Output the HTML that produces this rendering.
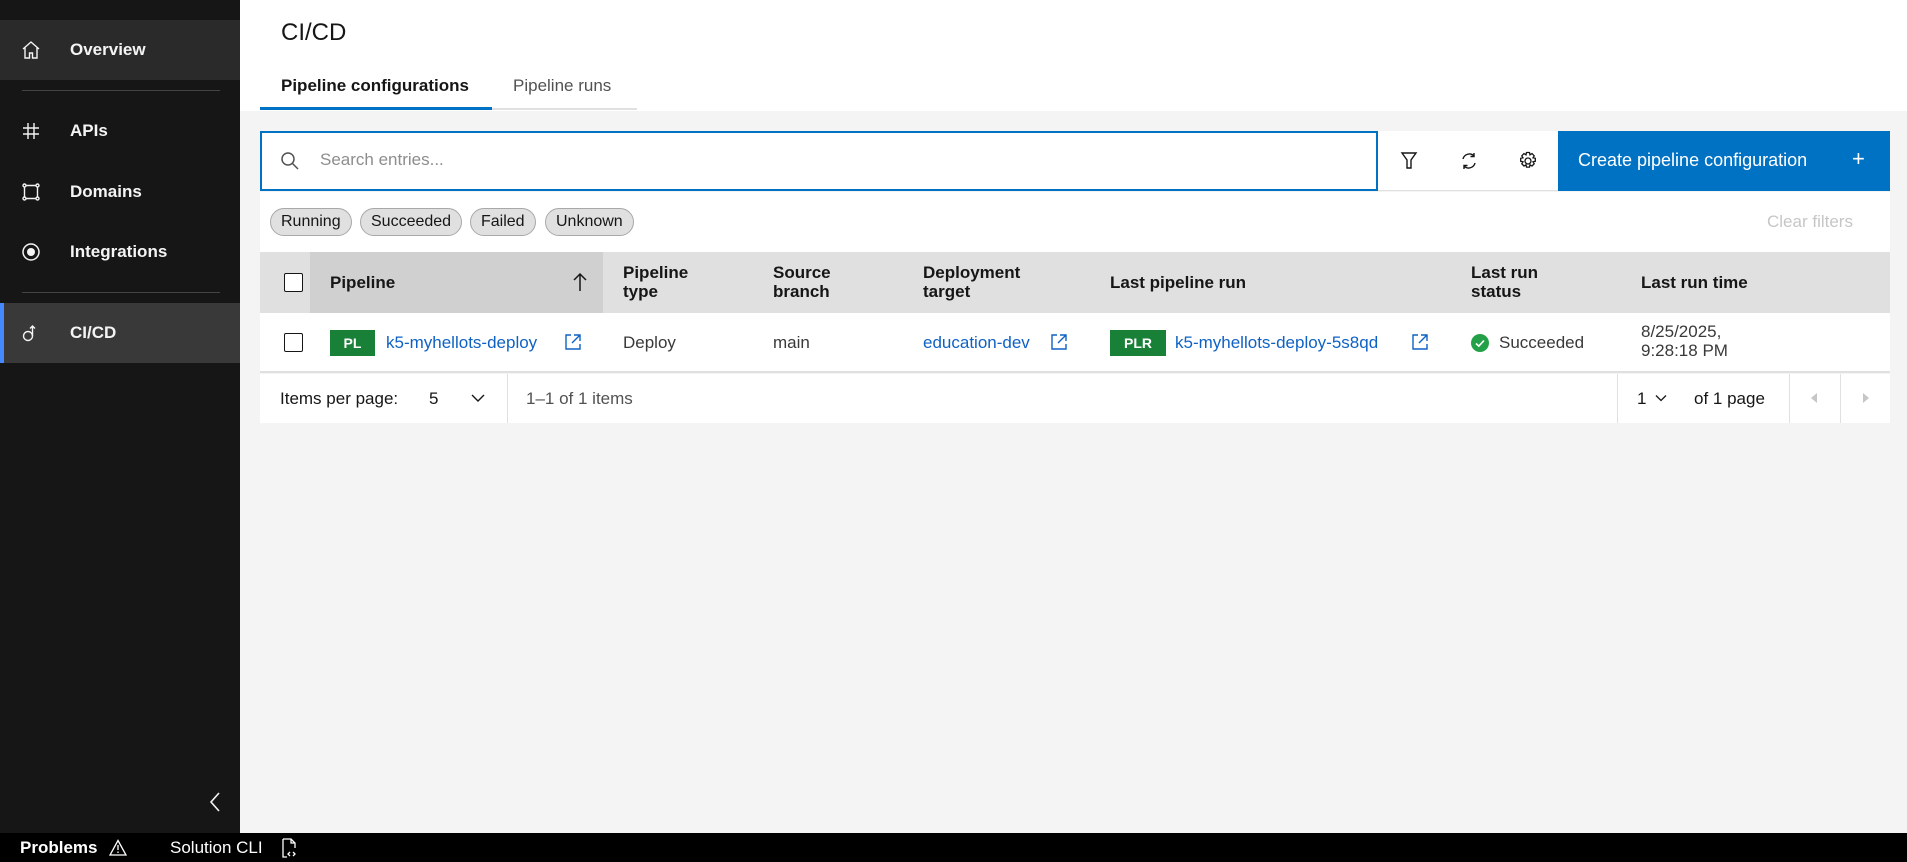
<!DOCTYPE html>
<html><head><meta charset="utf-8"><style>
*{box-sizing:border-box;margin:0;padding:0}
body{width:1907px;height:862px;overflow:hidden;background:#f4f4f4;font-family:"Liberation Sans",sans-serif;font-size:16px;color:#161616;position:relative}
.a{position:absolute}
.side{left:0;top:0;width:240px;height:833px;background:#161616}
.nav{position:absolute;left:0;width:240px;height:60px;color:#f4f4f4;font-weight:bold;font-size:17px}
.nav span{position:absolute;left:70px;top:50%;transform:translateY(-50%)}
.nav svg{position:absolute;left:21px;top:50%;transform:translateY(-50%)}
.div{position:absolute;left:22px;width:198px;height:1px;background:#444}
.bar{left:0;top:833px;width:1907px;height:29px;background:#000;color:#fff;font-size:17px}
.hdr{left:240px;top:0;width:1667px;height:111px;background:#fff}
.tag{position:absolute;top:208px;height:28px;border:1px solid #a8a8a8;background:#e0e0e0;border-radius:14px;font-size:16px;line-height:26px;padding:0 10px;color:#161616}
.th{position:absolute;font-weight:bold;font-size:17px;line-height:19px}
.td{position:absolute;font-size:17px;line-height:19px;color:#393939}
.lnk{color:#0f62c4}
.badge{position:absolute;background:#198038;color:#fff;font-weight:bold;font-size:14px;text-align:center;line-height:26px;height:26px}
.cb{position:absolute;width:19px;height:19px;border:1.5px solid #161616;border-radius:2px;background:#fff}
</style></head><body>
<div class="a side">
 <div class="nav" style="top:20px;background:#2a2a2a"><svg width="20" height="20" viewBox="0 0 20 20" fill="none" stroke="#f4f4f4" stroke-width="1.4"><path d="M2 9L10 2l8 7M4 7.5V18h4.5v-5h3v5H16V7.5"/></svg><span>Overview</span></div>
 <div class="div" style="top:90px"></div>
 <div class="nav" style="top:101px"><svg width="20" height="20" viewBox="0 0 20 20" fill="none" stroke="#f4f4f4" stroke-width="1.4"><path d="M7 2v16M13 2v16M2 7h16M2 13h16"/></svg><span>APIs</span></div>
 <div class="nav" style="top:162px"><svg width="20" height="20" viewBox="0 0 20 20" fill="none" stroke="#f4f4f4" stroke-width="1.4"><path d="M3.5 5v10M16.5 5v10M5 3.5h10M5 16.5h10"/><circle cx="3.5" cy="3.5" r="1.5"/><circle cx="16.5" cy="3.5" r="1.5"/><circle cx="3.5" cy="16.5" r="1.5"/><circle cx="16.5" cy="16.5" r="1.5"/></svg><span>Domains</span></div>
 <div class="nav" style="top:222px"><svg width="20" height="20" viewBox="0 0 20 20"><circle cx="10" cy="10" r="8" fill="none" stroke="#f4f4f4" stroke-width="1.5"/><circle cx="10" cy="10" r="4" fill="#f4f4f4"/></svg><span>Integrations</span></div>
 <div class="div" style="top:292px"></div>
 <div class="nav" style="top:303px;background:#393939;border-left:4px solid #4589ff"><svg width="20" height="20" viewBox="0 0 20 20" fill="none" stroke="#f4f4f4" stroke-width="1.4" style="left:17px"><circle cx="7" cy="13" r="4.5"/><path d="M11.5 13V3M9 5.5l2.5-2.5 2.5 2.5"/></svg><span style="left:66px">CI/CD</span></div>
 <svg class="a" style="left:207px;top:790px" width="16" height="24" viewBox="0 0 16 24" fill="none" stroke="#f4f4f4" stroke-width="1.6"><path d="M12 3L4 12l8 9"/></svg>
</div>
<div class="a bar">
 <span class="a" style="left:20px;top:5px;font-weight:bold">Problems</span>
 <svg class="a" style="left:109px;top:6px" width="18" height="17" viewBox="0 0 18 17" fill="none" stroke="#fff" stroke-width="1.3"><path d="M9 1.5L17 16H1z M9 6v5M9 12.5v1.5"/></svg>
 <span class="a" style="left:170px;top:5px">Solution CLI</span>
 <svg class="a" style="left:281px;top:5px" width="16" height="20" viewBox="0 0 16 20" fill="none" stroke="#fff" stroke-width="1.3"><path d="M2 1h8l4 4v5M10 1v4h4M2 1v18h4M9 14l-2 2 2 2M12 14l2 2-2 2"/></svg>
</div>
<div class="a hdr">
 <div class="a" style="left:41px;top:19px;font-size:24px">CI/CD</div>
 <div class="a" style="left:41px;top:76px;font-size:17px;font-weight:bold">Pipeline configurations</div>
 <div class="a" style="left:273px;top:76px;font-size:17px;color:#525252">Pipeline runs</div>
 <div class="a" style="left:20px;top:107px;width:232px;height:3px;background:#0072c3"></div>
 <div class="a" style="left:252px;top:108px;width:145px;height:2px;background:#e0e0e0"></div>
</div>
<div class="a" style="left:260px;top:131px;width:1630px;height:60px;background:#fff;border-bottom:1px solid #e0e0e0"></div>
<div class="a" style="left:260px;top:131px;width:1118px;height:60px;border:2px solid #0072c3;background:#fff"></div>
<svg class="a" style="left:280px;top:151px" width="20" height="20" viewBox="0 0 20 20" fill="none" stroke="#525252" stroke-width="1.5"><circle cx="8" cy="8" r="6"/><path d="M12.5 12.5L18 18"/></svg>
<div class="a" style="left:320px;top:150px;font-size:17px;color:#8d8d8d">Search entries...</div>
<svg class="a" style="left:1400px;top:151px" width="18" height="20" viewBox="0 0 18 20" fill="none" stroke="#161616" stroke-width="1.4"><path d="M2 2h14l-5 7v8h-4v-8z"/></svg>
<svg class="a" style="left:1459px;top:151px" width="20" height="20" viewBox="0 0 20 20" fill="none" stroke="#161616" stroke-width="1.4"><path d="M4 8a6.5 6.5 0 0 1 11-3M16 12a6.5 6.5 0 0 1-11 3M15 2v3.5h-3.5M5 18v-3.5h3.5"/></svg>
<svg class="a" style="left:1518px;top:151px" width="20" height="20" viewBox="0 0 20 20" fill="none" stroke="#161616" stroke-width="1.3"><circle cx="10" cy="10" r="3"/><path d="M8.5 1.5h3l.5 2.3 2-1.2 2.2 2.2-1.2 2 2.3.5v3l-2.3.5 1.2 2-2.2 2.2-2-1.2-.5 2.3h-3l-.5-2.3-2 1.2-2.2-2.2 1.2-2-2.3-.5v-3l2.3-.5-1.2-2 2.2-2.2 2 1.2z"/></svg>
<div class="a" style="left:1558px;top:131px;width:332px;height:60px;background:#0072c3;color:#fff;font-size:18px">
 <span class="a" style="left:20px;top:19px">Create pipeline configuration</span>
 <span class="a" style="left:294px;top:15px;font-size:22px">+</span>
</div>
<div class="a" style="left:260px;top:192px;width:1630px;height:60px;background:#fff"></div>
<div class="tag" style="left:270px">Running</div>
<div class="tag" style="left:360px">Succeeded</div>
<div class="tag" style="left:470px">Failed</div>
<div class="tag" style="left:545px">Unknown</div>
<div class="a" style="left:1767px;top:212px;font-size:17px;color:#c6c6c6">Clear filters</div>
<div class="a" style="left:260px;top:252px;width:1630px;height:61px;background:#e0e0e0"></div>
<div class="a" style="left:310px;top:252px;width:293px;height:61px;background:#d0d0d0"></div>
<div class="cb" style="left:284px;top:273px"></div>
<div class="th" style="left:330px;top:273px">Pipeline</div>
<svg class="a" style="left:572px;top:272px" width="16" height="20" viewBox="0 0 16 20" fill="none" stroke="#161616" stroke-width="1.5"><path d="M8 19V2M2 8l6-6 6 6"/></svg>
<div class="th" style="left:623px;top:263px">Pipeline<br>type</div>
<div class="th" style="left:773px;top:263px">Source<br>branch</div>
<div class="th" style="left:923px;top:263px">Deployment<br>target</div>
<div class="th" style="left:1110px;top:273px">Last pipeline run</div>
<div class="th" style="left:1471px;top:263px">Last run<br>status</div>
<div class="th" style="left:1641px;top:273px">Last run time</div>
<div class="a" style="left:260px;top:313px;width:1630px;height:60px;background:#fff;border-bottom:2px solid #e0e0e0"></div>
<div class="cb" style="left:284px;top:333px"></div>
<div class="badge" style="left:330px;top:330px;width:45px">PL</div>
<div class="td lnk" style="left:386px;top:333px">k5-myhellots-deploy</div>
<svg class="a" style="left:564px;top:333px" width="18" height="18" viewBox="0 0 18 18" fill="none" stroke="#0f62c4" stroke-width="1.4"><path d="M7 2H2v14h14v-5M10 2h6v6M16 2L8 10"/></svg>
<div class="td" style="left:623px;top:333px">Deploy</div>
<div class="td" style="left:773px;top:333px">main</div>
<div class="td lnk" style="left:923px;top:333px">education-dev</div>
<svg class="a" style="left:1050px;top:333px" width="18" height="18" viewBox="0 0 18 18" fill="none" stroke="#0f62c4" stroke-width="1.4"><path d="M7 2H2v14h14v-5M10 2h6v6M16 2L8 10"/></svg>
<div class="badge" style="left:1110px;top:330px;width:56px">PLR</div>
<div class="td lnk" style="left:1175px;top:333px">k5-myhellots-deploy-5s8qd</div>
<svg class="a" style="left:1411px;top:333px" width="18" height="18" viewBox="0 0 18 18" fill="none" stroke="#0f62c4" stroke-width="1.4"><path d="M7 2H2v14h14v-5M10 2h6v6M16 2L8 10"/></svg>
<svg class="a" style="left:1471px;top:334px" width="18" height="18" viewBox="0 0 18 18"><circle cx="9" cy="9" r="9" fill="#24a148"/><path d="M5 9.5l2.8 2.6L13 6.5" fill="none" stroke="#fff" stroke-width="1.6"/></svg>
<div class="td" style="left:1499px;top:333px">Succeeded</div>
<div class="td" style="left:1641px;top:322px">8/25/2025,<br>9:28:18 PM</div>
<div class="a" style="left:260px;top:374px;width:1630px;height:49px;background:#fff"></div>
<div class="a" style="left:507px;top:374px;width:1px;height:49px;background:#e0e0e0"></div>
<div class="a" style="left:1617px;top:374px;width:1px;height:49px;background:#e0e0e0"></div>
<div class="a" style="left:1789px;top:374px;width:1px;height:49px;background:#e0e0e0"></div>
<div class="a" style="left:1840px;top:374px;width:1px;height:49px;background:#e0e0e0"></div>
<div class="td" style="left:280px;top:389px;color:#161616">Items per page:</div>
<div class="td" style="left:429px;top:389px;color:#161616">5</div>
<svg class="a" style="left:471px;top:393px" width="14" height="10" viewBox="0 0 14 10" fill="none" stroke="#161616" stroke-width="1.4"><path d="M1 2l6 6 6-6"/></svg>
<div class="td" style="left:526px;top:389px;color:#525252">1–1 of 1 items</div>
<div class="td" style="left:1637px;top:389px;color:#161616">1</div>
<svg class="a" style="left:1655px;top:394px" width="12" height="8" viewBox="0 0 12 8" fill="none" stroke="#161616" stroke-width="1.3"><path d="M1 1.5l5 5 5-5"/></svg>
<div class="td" style="left:1694px;top:389px;color:#161616">of 1 page</div>
<svg class="a" style="left:1810px;top:392px" width="8" height="12" viewBox="0 0 8 12"><path d="M7 1L1 6l6 5z" fill="#c6c6c6"/></svg>
<svg class="a" style="left:1862px;top:392px" width="8" height="12" viewBox="0 0 8 12"><path d="M1 1l6 5-6 5z" fill="#c6c6c6"/></svg>
</body></html>
